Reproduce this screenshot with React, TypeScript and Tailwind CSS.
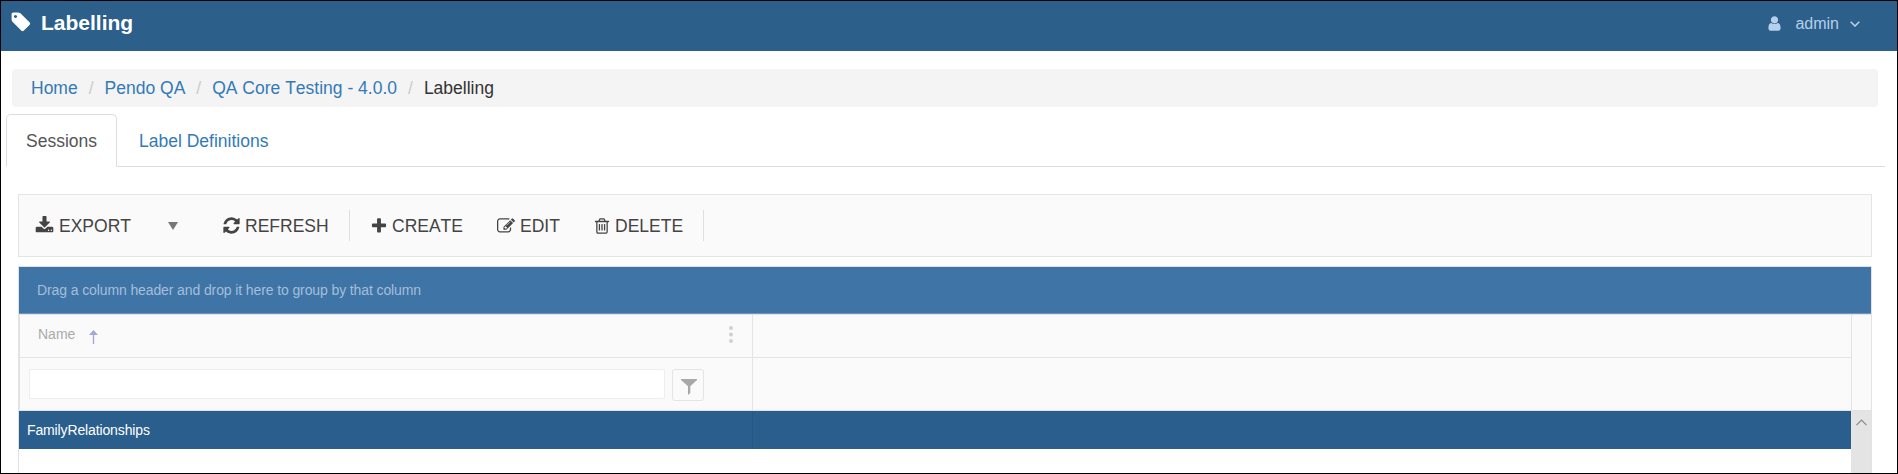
import React from 'react';

const paths = {
  download:
    'M1344 1344q0-26-19-45t-45-19-45 19-19 45 19 45 45 19 45-19 19-45zm256 0q0-26-19-45t-45-19-45 19-19 45 19 45 45 19 45-19 19-45zm128-224v320q0 40-28 68t-68 28h-1472q-40 0-68-28t-28-68v-320q0-40 28-68t68-28h465l135 136q58 56 136 56t136-56l136-136h464q40 0 68 28t28 68zm-325-569q17 41-14 70l-448 448q-18 19-45 19t-45-19l-448-448q-31-29-14-70 17-39 59-39h256v-448q0-26 19-45t45-19h256q26 0 45 19t19 45v448h256q42 0 59 39z',
  refresh:
    'M1639 1056q0 5-1 7-64 268-268 434.5t-478 166.5q-146 0-282.5-55t-243.5-157l-129 129q-19 19-45 19t-45-19-19-45v-448q0-26 19-45t45-19h448q26 0 45 19t19 45-19 45l-137 137q71 66 161 102t187 36q134 0 250-65t186-179q11-17 53-117 8-23 30-23h192q13 0 22.5 9.5t9.5 22.5zm25-800v448q0 26-19 45t-45 19h-448q-26 0-45-19t-19-45 19-45l138-138q-148-137-349-137-134 0-250 65t-186 179q-11 17-53 117-8 23-30 23h-199q-13 0-22.5-9.5t-9.5-22.5v-7q65-268 270-434.5t480-166.5q146 0 284 55.5t245 156.5l130-129q19-19 45-19t45 19 19 45z',
  plus:
    'M1600 736v192q0 40-28 68t-68 28h-416v416q0 40-28 68t-68 28h-192q-40 0-68-28t-28-68v-416h-416q-40 0-68-28t-28-68v-192q0-40 28-68t68-28h416v-416q0-40 28-68t68-28h192q40 0 68 28t28 68v416h416q40 0 68 28t28 68z',
  edit:
    'M888 1184l116-116-152-152-116 116v56h96v96h56zm440-720q-16-16-33 1l-350 350q-17 17-1 33t33-1l350-350q17-17 1-33zm80 594v190q0 119-84.5 203.5t-203.5 84.5h-832q-119 0-203.5-84.5t-84.5-203.5v-832q0-119 84.5-203.5t203.5-84.5h832q63 0 117 25 15 7 18 23 3 17-9 29l-49 49q-14 14-32 8-23-6-45-6h-832q-66 0-113 47t-47 113v832q0 66 47 113t113 47h832q66 0 113-47t47-113v-126q0-13 9-22l64-64q15-15 35-7t20 29zm-96-738l288 288-672 672h-288v-288zm444 132l-92 92-288-288 92-92q28-28 68-28t68 28l152 152q28 28 28 68t-28 68z',
  trash:
    'M704 736v576q0 14-9 23t-23 9h-64q-14 0-23-9t-9-23v-576q0-14 9-23t23-9h64q14 0 23 9t9 23zm256 0v576q0 14-9 23t-23 9h-64q-14 0-23-9t-9-23v-576q0-14 9-23t23-9h64q14 0 23 9t9 23zm256 0v576q0 14-9 23t-23 9h-64q-14 0-23-9t-9-23v-576q0-14 9-23t23-9h64q14 0 23 9t9 23zm128 724v-948h-896v948q0 22 7 40.5t14.5 27 10.5 8.5h832q3 0 10.5-8.5t14.5-27 7-40.5zm-672-1076h448l-48-117q-7-9-17-11h-317q-10 2-17 11zm928 32v64q0 14-9 23t-23 9h-96v948q0 83-47 143.5t-113 60.5h-832q-66 0-113-58.5t-47-141.5v-952h-96q-14 0-23-9t-9-23v-64q0-14 9-23t23-9h309l70-167q15-37 54-63t79-26h320q40 0 79 26t54 63l70 167h309q14 0 23 9t9 23z',
  user:
    'M1536 1399q0 109-62.5 187t-150.5 78h-854q-88 0-150.5-78t-62.5-187q0-85 8.5-160.5t31.5-152 58.5-131 94-89 134.5-34.5q131 128 313 128t313-128q76 0 134.5 34.5t94 89 58.5 131 31.5 152 8.5 160.5zm-256-887q0 159-112.5 271.5t-271.5 112.5-271.5-112.5-112.5-271.5 112.5-271.5 271.5-112.5 271.5 112.5 112.5 271.5z',
  tag:
    'M576 448q0-53-37.5-90.5t-90.5-37.5-90.5 37.5-37.5 90.5 37.5 90.5 90.5 37.5 90.5-37.5 37.5-90.5zm1067 576q0 53-37 90l-491 492q-39 37-91 37-53 0-90-37l-715-716q-38-37-64.5-101t-26.5-117v-416q0-52 38-90t90-38h416q53 0 117 26.5t102 64.5l715 714q37 39 37 91z',
};

function Icon({ name, className }: { name: keyof typeof paths; className: string }) {
  return (
    <svg viewBox="0 0 1792 1792" fill="currentColor" className={`shrink-0 ${className}`}>
      <path d={paths[name]} />
    </svg>
  );
}

function Header() {
  return (
    <header className="flex h-[50px] shrink-0 items-start bg-[#2c5f8a]">
      <Icon name="tag" className="ml-[9px] mt-[10px] size-[22px] text-white" />
      <h1 className="ml-[9px] mt-[7px] text-[21px] font-bold leading-[30px] text-white">Labelling</h1>
      <div className="ml-auto mr-[37px] mt-[8px] flex items-center text-[16px] leading-[30px] text-[#b5d0ea]">
        <Icon name="user" className="mb-[2px] mr-[12px] size-[17px]" />
        <span>admin</span>
        <svg viewBox="0 0 10 6" className="ml-[11px] h-[6px] w-[10px]" fill="none" stroke="currentColor" strokeWidth="1.6">
          <path d="M0.7 0.7 5 5 9.3 0.7" />
        </svg>
      </div>
    </header>
  );
}

function Breadcrumb() {
  const links = ['Home', 'Pendo QA', 'QA Core Testing - 4.0.0'];
  return (
    <nav className="ml-[11px] mr-[19px] mt-[18px] flex h-[38px] shrink-0 items-center rounded-[4px] bg-[#f4f4f4] pl-[19px]">
      {links.map((label) => (
        <React.Fragment key={label}>
          <a className="text-[#337ab7]">{label}</a>
          <span className="mx-[11px] text-[#cccccc]">/</span>
        </React.Fragment>
      ))}
      <span className="text-[#333333]">Labelling</span>
    </nav>
  );
}

function Tabs() {
  return (
    <div className="ml-[5px] mr-[12px] mt-[7px] flex h-[53px] shrink-0 border-b border-[#dddddd]">
      <a className="flex h-[53px] w-[111px] items-center justify-center rounded-t-[5px] border border-b-white border-[#dddddd] bg-white pt-[2px] text-[#555555]">
        Sessions
      </a>
      <a className="ml-[22px] flex h-[53px] items-center pt-[2px] text-[#337ab7]">Label Definitions</a>
    </div>
  );
}

function Toolbar() {
  return (
    <div className="ml-[17px] mr-[25px] mt-[27px] flex h-[63px] shrink-0 items-center border border-[#e4e4e4] bg-[#fafafa] text-[#444444]">
      <button className="ml-[16px] flex w-[97px] items-center gap-[5px]">
        <Icon name="download" className="size-[19px]" />
        <span className="pt-[1px]">EXPORT</span>
      </button>
      <svg viewBox="0 0 10 8" className="ml-[36px] h-[8px] w-[10px] fill-[#777777]">
        <path d="M0 0h10L5 8z" />
      </svg>
      <button className="ml-[44px] flex w-[107px] items-center gap-[4px]">
        <Icon name="refresh" className="size-[19px]" />
        <span className="pt-[1px]">REFRESH</span>
      </button>
      <div className="ml-[20px] h-[31px] w-px bg-[#dfdfdf]" />
      <button className="ml-[20px] flex w-[94px] items-center gap-[4px]">
        <Icon name="plus" className="size-[18px]" />
        <span className="pt-[1px]">CREATE</span>
      </button>
      <button className="ml-[33px] flex w-[65px] items-center gap-[5px]">
        <Icon name="edit" className="size-[18px]" />
        <span className="pt-[1px]">EDIT</span>
      </button>
      <button className="ml-[31px] flex w-[90px] items-center gap-[4px]">
        <Icon name="trash" className="size-[18px]" />
        <span className="pt-[1px]">DELETE</span>
      </button>
      <div className="ml-[20px] h-[31px] w-px bg-[#dfdfdf]" />
    </div>
  );
}

function Grid() {
  return (
    <div className="ml-[17px] mr-[25px] mt-[9px] flex min-h-0 flex-1 flex-col border border-b-0 border-[#e2e2e2] text-[14px]">
      <div className="flex h-[47px] shrink-0 items-center border-b border-[#6f97bb] bg-[#3f74a7] pl-[18px] tracking-[-0.11px] text-[#a3bfd9]">
        Drag a column header and drop it here to group by that column
      </div>
      <div className="flex h-[97px] shrink-0 border-y border-[#e2e2e2] bg-[#fafafa]">
        <div className="flex w-[734px] flex-col border-x border-[#e4e4e4]">
          <div className="flex h-[43px] items-center border-b border-[#e4e4e4] pb-[3px] pl-[18px] pr-[18px] text-[#aaaaaa]">
            <span>Name</span>
            <svg viewBox="0 0 9 14" className="ml-[14px] mt-[5px] h-[14px] w-[9px]" fill="#a3a8dc">
              <path d="M4.5 0 9 5H5.2v9H3.8V5H0z" />
            </svg>
            <svg viewBox="0 0 4 17" className="ml-auto mr-[1px] h-[17px] w-[4px] fill-[#d0d0d0]">
              <circle cx="2" cy="2" r="2" />
              <circle cx="2" cy="8.5" r="2" />
              <circle cx="2" cy="15" r="2" />
            </svg>
          </div>
          <div className="flex flex-1 items-start pl-[9px] pt-[11px]">
            <input className="h-[30px] w-[636px] rounded-[2px] border border-[#eeeeee] bg-white" />
            <button className="ml-[7px] flex size-[32px] items-center justify-center rounded-[3px] border border-[#e4e4e4] bg-[#fafafa]">
              <svg viewBox="0 0 16 16" className="ml-[1px] mt-[3px] size-[16px] fill-[#a8a8a8]">
                <path d="M0 0h16v1L9.3 7.3V14L7 16V7.3L0 1z" />
              </svg>
            </button>
          </div>
        </div>
        <div className="flex w-[1099px] flex-col border-r border-[#e2e2e2]">
          <div className="h-[43px] border-b border-[#e4e4e4]" />
        </div>
      </div>
      <div className="flex min-h-0 flex-1">
        <div className="flex-1">
          <div className="flex h-[38px] bg-[#295e8d] text-white">
            <div className="flex w-[734px] items-center border-r border-[#27567f] pl-[8px] tracking-[-0.13px]">
              FamilyRelationships
            </div>
          </div>
        </div>
        <div className="flex w-[20px] justify-center bg-[#e4e4e4] pt-[8px]">
          <svg viewBox="0 0 11 7" className="h-[7px] w-[11px]" fill="none" stroke="#888888" strokeWidth="1.2">
            <path d="M0.5 6.2 5.5 1l5 5.2" />
          </svg>
        </div>
      </div>
    </div>
  );
}

export default function App() {
  return (
    <div className="flex h-[474px] w-full flex-col overflow-hidden border border-black bg-white font-['Liberation_Sans',Arial,sans-serif] text-[17.5px] leading-[25px] [font-kerning:none]">
      <Header />
      <Breadcrumb />
      <Tabs />
      <Toolbar />
      <Grid />
    </div>
  );
}
